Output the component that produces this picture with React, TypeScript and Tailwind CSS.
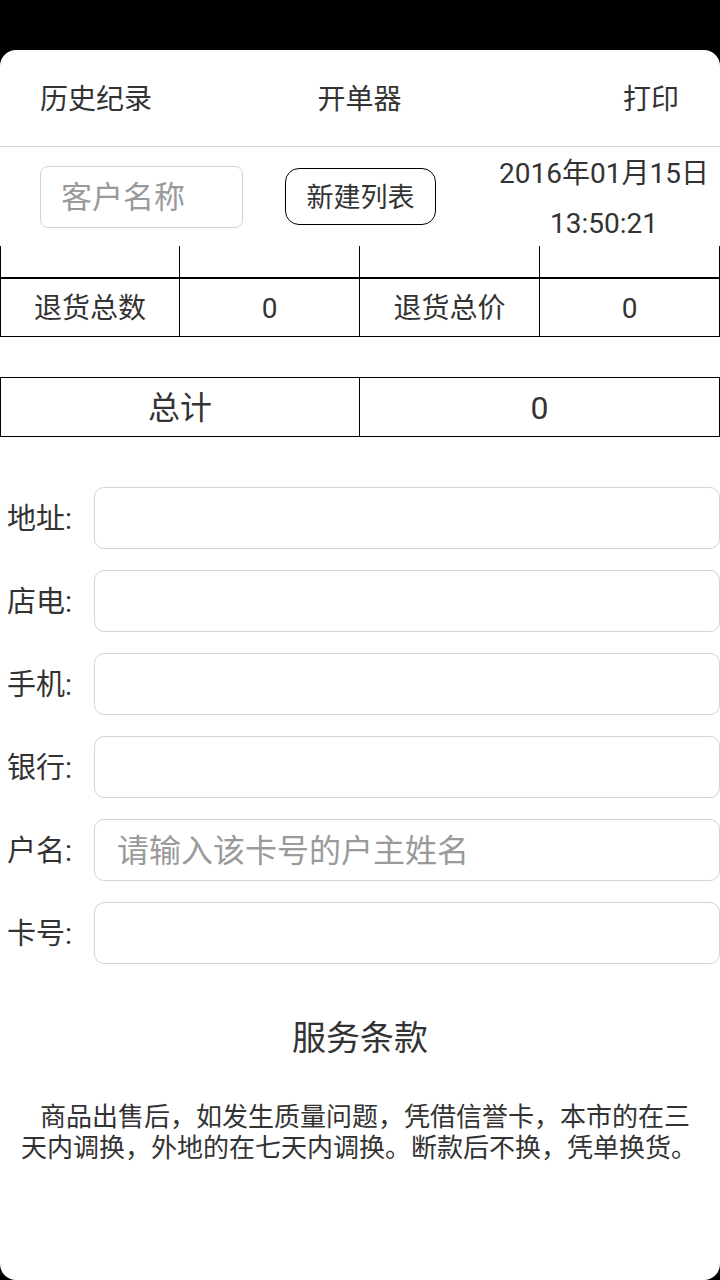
import React from 'react';

const fields: { label: string; placeholder?: string }[] = [
  { label: '地址:' },
  { label: '店电:' },
  { label: '手机:' },
  { label: '银行:' },
  { label: '户名:', placeholder: '请输入该卡号的户主姓名' },
  { label: '卡号:' },
];

const App: React.FC = () => {
  return (
    <div
      className="h-[1280px] w-[720px] bg-black pt-[50px] text-[#333]"
      style={{ fontFamily: 'Roboto, "Noto Sans CJK SC", sans-serif' }}
    >
      <div className="flex h-[1230px] flex-col overflow-hidden rounded-[16px] bg-white">
        {/* Top bar */}
        <div className="grid h-[97px] shrink-0 grid-cols-3 items-center border-b border-[#d4d4d4] px-[40px] pr-[41px] pt-[3px] text-[28px]">
          <span>历史纪录</span>
          <span className="text-center">开单器</span>
          <span className="text-right">打印</span>
        </div>

        {/* Customer row */}
        <div className="flex h-[99px] shrink-0 items-center">
          <input
            className="ml-[40px] h-[62px] w-[203px] rounded-[8px] border border-[#d4d4d4] pl-[20px] pt-[2px] text-[31px] outline-none placeholder:text-[#9a9a9a]"
            placeholder="客户名称"
          />
          <button className="ml-[42px] h-[57px] w-[151px] rounded-[14px] border border-black pt-[3px] text-[27px]">
            新建列表
          </button>
          <div className="ml-[52px] flex w-[232px] flex-col items-center pt-[5px] text-[28px] leading-[50px]">
            <span>2016年01月15日</span>
            <span>13:50:21</span>
          </div>
        </div>

        {/* Table (scrolled) */}
        <div className="grid h-[31px] shrink-0 grid-cols-4">
          <div className="border-l border-r border-black" />
          <div className="border-r border-black" />
          <div className="border-r border-black" />
          <div className="border-r border-black" />
        </div>
        <div className="grid h-[60px] shrink-0 grid-cols-4 border-b border-t-2 border-black text-[28px]">
          <div className="flex items-center justify-center border-l border-r border-black pt-[3px]">退货总数</div>
          <div className="flex items-center justify-center border-r border-black pt-[3px]">0</div>
          <div className="flex items-center justify-center border-r border-black pt-[3px]">退货总价</div>
          <div className="flex items-center justify-center border-r border-black pt-[3px]">0</div>
        </div>

        {/* Total */}
        <div className="mt-[40px] grid h-[60px] shrink-0 grid-cols-2 border border-black text-[32px]">
          <div className="flex items-center justify-center border-r border-black pt-[2px]">总计</div>
          <div className="flex items-center justify-center pt-[2px]">0</div>
        </div>

        {/* Form */}
        <div className="mt-[50px] flex flex-col gap-[21px]">
          {fields.map((f) => (
            <div key={f.label} className="flex items-center">
              <label className="w-[94px] pl-[7px] pt-[3px] text-[29px]">{f.label}</label>
              <input
                className="h-[62px] flex-1 rounded-[10px] border border-[#d4d4d4] pl-[22px] pt-[2px] text-[32px] outline-none placeholder:text-[#9a9a9a]"
                placeholder={f.placeholder}
              />
            </div>
          ))}
        </div>

        {/* Terms */}
        <div className="mt-[52px] text-center text-[34px] leading-[44px]">服务条款</div>
        <p className="mt-[42px] pl-[21px] pr-[20px] indent-[19px] text-[26px] leading-[31px]">
          商品出售后，如发生质量问题，凭借信誉卡，本市的在三天内调换，外地的在七天内调换。断款后不换，凭单换货。
        </p>
      </div>
    </div>
  );
};

export default App;
